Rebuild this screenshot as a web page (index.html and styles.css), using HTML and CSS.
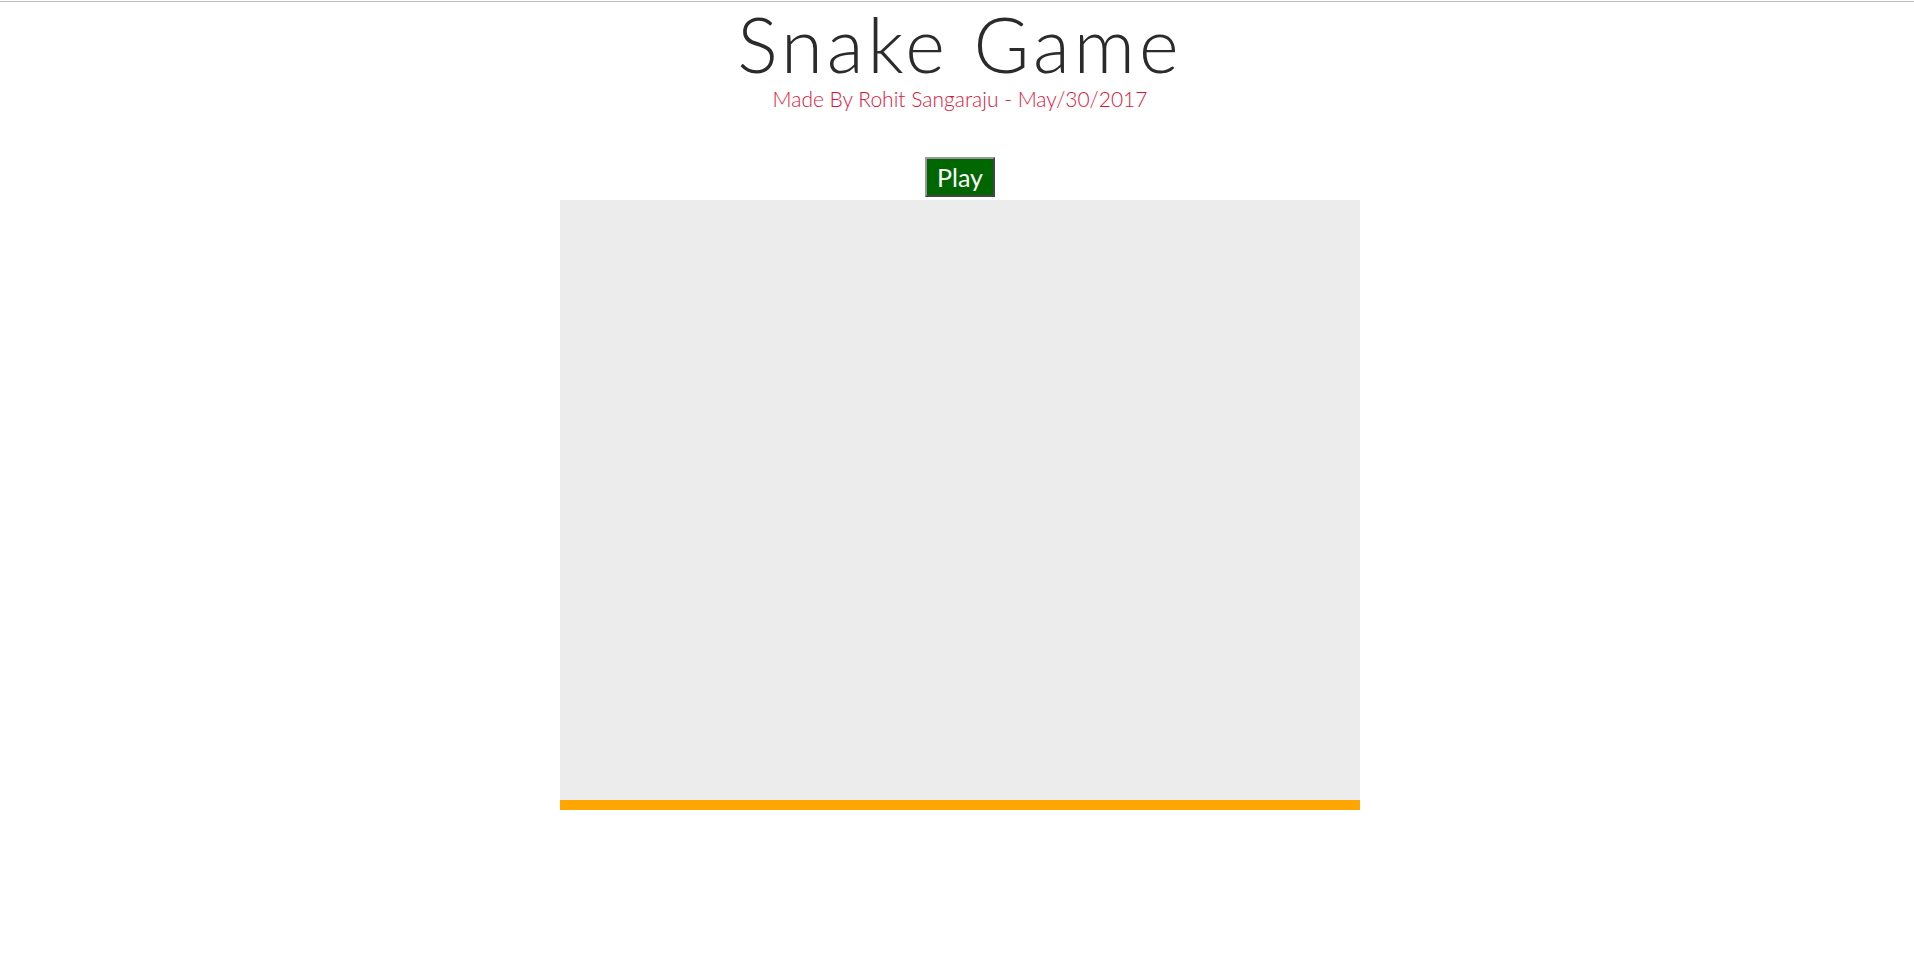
FILE: index.html
```html
<!DOCTYPE html>
<html>
<head>
<meta charset="utf-8">
<title>Snake Game</title>
<link rel="stylesheet" href="styles.css">
</head>
<body>
<div class="topline"></div>
<div class="page">
  <header class="header">
    <h1 class="title">Snake Game</h1>
    <p class="subtitle">Made By Rohit Sangaraju - May/30/2017</p>
  </header>
  <main class="game">
    <button class="play">Play</button>
    <div class="board"></div>
  </main>
</div>
</body>
</html>
```
FILE: styles.css
```css
html, body {
  margin: 0;
  padding: 0;
  background: #fff;
}
body {
  font-family: "Lato", "Open Sans", sans-serif;
  font-weight: 300;
}
.topline {
  margin-top: 1px;
  height: 1px;
  background: #bbbbbb;
}
.page {
  padding-left: 6px;
}
.header {
  display: flex;
  flex-direction: column;
  align-items: center;
}
.title {
  margin: 0;
  font-size: 76px;
  font-weight: 300;
  line-height: 84px;
  letter-spacing: 4px;
  color: #2b2b2b;
}
.subtitle {
  margin: 0;
  font-size: 21px;
  line-height: 26px;
  color: #dc143c;
}
.game {
  display: flex;
  flex-direction: column;
  align-items: center;
  margin-top: 45px;
}
.play {
  width: 70px;
  height: 40px;
  background: #006600;
  color: #fff;
  border: 2px outset #999;
  font-family: "Lato", sans-serif;
  font-weight: 400;
  font-size: 25px;
  padding: 0;
  margin-bottom: 3px;
}
.board {
  width: 800px;
  height: 600px;
  background: #ececec;
  border-bottom: 10px solid #ffa500;
}
```
